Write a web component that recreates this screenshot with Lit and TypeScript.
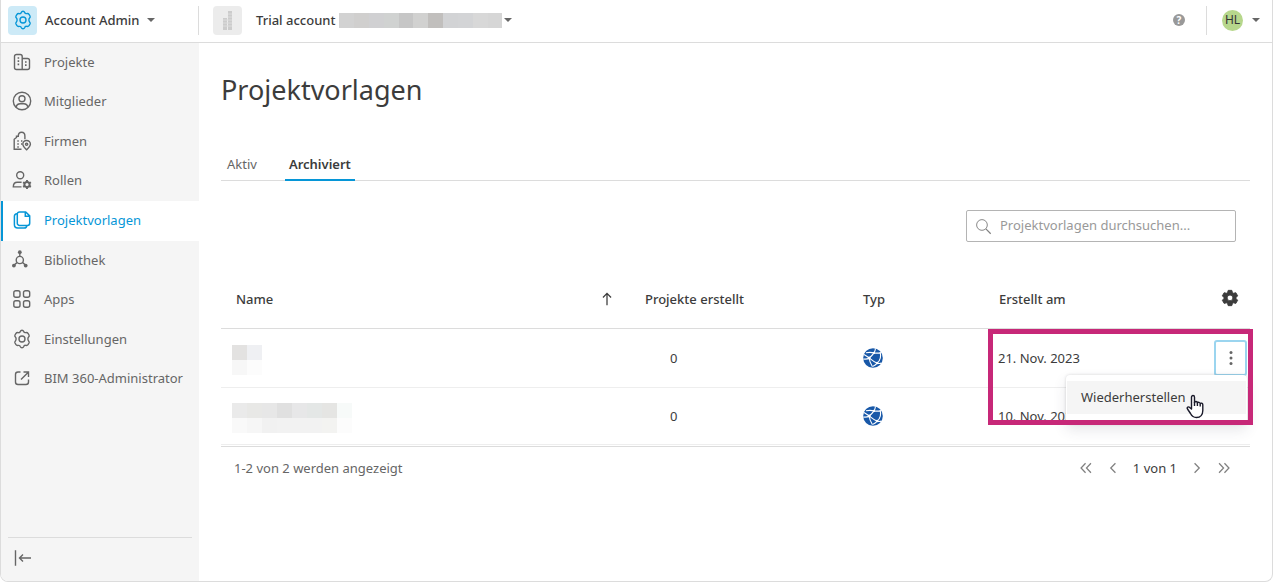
import { LitElement, html, css, svg, nothing } from "lit";
import { customElement, property, state } from "lit/decorators.js";
import { classMap } from "lit/directives/class-map.js";

const gear = svg`<path d="M10 1.200c.9 0 1.400.5 1.700 1.300.3.900 1.100 1.300 2 1.100 1-.2 1.800-.1 2.300.7l1 1.700c.5.900.2 1.500-.4 2.100-.7.700-.7 1.500-.7 1.900s0 1.200.7 1.900c.6.600.9 1.200.4 2.100l-1 1.700c-.5.800-1.300.9-2.300.7-.9-.2-1.700.2-2 1.100-.3.800-.8 1.300-1.700 1.300s-1.400-.5-1.700-1.300c-.3-.9-1.100-1.300-2-1.100-1 .2-1.800.1-2.300-.7l-1-1.700c-.5-.9-.2-1.500.4-2.100.7-.7.7-1.500.7-1.900s0-1.200-.7-1.900c-.6-.6-.9-1.200-.4-2.100l1-1.700c.5-.8 1.300-.9 2.300-.7.9.2 1.700-.2 2-1.100.3-.8.800-1.300 1.700-1.300z"/><circle cx="10" cy="10" r="3"/>`;

const icons: Record<string, unknown> = {
  gear,
  projects: svg`<path d="M10.500 17.500h-6a2 2 0 0 1-2-2v-11a2 2 0 0 1 2-2h3.700a2 2 0 0 1 2 2v13M10.200 6.500h5.300a2 2 0 0 1 2 2v7a2 2 0 0 1-2 2h-5.300"/><path d="M5.600 6h1.600M5.600 9.200h1.600M5.600 12.400h1.600M13 10h1.600M13 13.200h1.600" stroke-width="1.700"/>`,
  members: svg`<circle cx="10" cy="10" r="8.700"/><circle cx="10" cy="7.800" r="3"/><path d="M4 16c.6-2.300 2-3.300 4-3.300h4c2 0 3.400 1 4 3.300"/>`,
  companies: svg`<path d="M9.500 18.300H2.200V8.300l2.300-1.800V5.200h1.800c0-2.300 1.400-3.900 3.300-3.900s3.300 1.600 3.300 3.900v3M2.200 18.300h6"/><path d="M5.300 10h1.500M5.300 13h1.500M5.300 16h1.500M9 10h1.400M9 13h1" stroke-width="1.500"/><path d="M14.600 18.800c-2.200-2.200-3.800-3.700-3.800-5.500a3.800 3.800 0 0 1 7.600 0c0 1.800-1.600 3.300-3.800 5.500z"/><circle cx="14.600" cy="13.200" r="1.100"/>`,
  roles: svg`<circle cx="8.200" cy="5.200" r="3.500"/><path d="M9.500 16.900H1.300c0-3 1.500-4.700 4-4.700h4.300"/><circle cx="15" cy="14.500" r="2.600" stroke-width="2"/><path d="M15 10v1.800M15 17.200V19M11.100 12.200l1.600 1M17.300 15.900l1.600.9M11.100 16.800l1.600-.9M17.300 13.200l1.600-1" stroke-width="1.900"/>`,
  templates: svg`<path d="M7.500 1.900h6.200l4 4v7.300a2.200 2.200 0 0 1-2.200 2.200h-8a2.200 2.200 0 0 1-2.200-2.200V4.100a2.200 2.200 0 0 1 2.200-2.200zM13.300 2v4.200h4.200" stroke-width="1.500"/><path d="M5 3.800c-1.700.1-2.600 1-2.600 2.500v8.500c0 2 1.300 3.200 3.300 3.200h6.600c1.500 0 2.400-.8 2.500-2.400" stroke-width="1.500"/>`,
  library: svg`<circle cx="7.800" cy="10" r="3.600"/><path d="M7.800 6.400V2M5 12.600l-3.500 2.900M10.600 12.600l3.500 2.900"/><g fill="currentColor" stroke="none"><circle cx="7.800" cy="2.200" r="1.900"/><circle cx="1.900" cy="15.600" r="1.900"/><circle cx="13.700" cy="15.600" r="1.900"/></g>`,
  apps: svg`<rect x="1.800" y="1.700" width="6.200" height="6.600" rx="2"/><rect x="11.500" y="1.700" width="6.200" height="6.600" rx="2"/><rect x="1.800" y="11.700" width="6.200" height="6.600" rx="2"/><rect x="11.500" y="11.700" width="6.200" height="6.600" rx="2"/>`,
  external: svg`<path d="M8.500 4H6a2.500 2.500 0 0 0-2.500 2.500V14A2.500 2.500 0 0 0 6 16.500h8a2.500 2.500 0 0 0 2.500-2.500v-2.500M11.500 4h5v5M16.300 4.200l-7.300 7.300"/>`,
  collapse: svg`<path d="M2.500 2.300v15.400M18 10H6.500M10 6.500L6.500 10l3.500 3.500"/>`,
  search: svg`<circle cx="8.200" cy="8.200" r="6.300" stroke-width="1.100"/><path d="M12.800 12.800l5.700 5.700" stroke-width="1.400"/>`,
  up: svg`<path d="M10 17V4M5.500 8.300L10 3.800l4.500 4.500"/>`,
  first: svg`<path d="M9.500 4.700L4.500 10l5 5.300M15.500 4.700l-5 5.300 5 5.300"/>`,
  prev: svg`<path d="M12.700 4.700L7.500 10l5.200 5.300"/>`,
  next: svg`<path d="M7.300 4.700l5.200 5.300-5.200 5.300"/>`,
  last: svg`<path d="M4.500 4.700l5 5.300-5 5.300M10.500 4.700l5 5.300-5 5.300"/>`,
};

const icon = (name: string) => html`<svg
  class="icon"
  viewBox="0 0 20 20"
  fill="none"
  stroke="currentColor"
  stroke-width="1.400"
  aria-hidden="true"
>${icons[name]}</svg>`;

const caret = html`<svg class="caret" viewBox="0 0 8 4" aria-hidden="true"><path d="M0 0h8L4 4z" fill="currentColor" /></svg>`;

const globe = html`<svg class="globe" viewBox="0 0 20 20" role="img" aria-label="Web">
  <circle cx="10" cy="10" r="9.800" fill="#1858a8" />
  <g fill="none" stroke="#fff" stroke-width="1.100">
    <path d="M1 6.500c1.500 1 3.500 2.300 5.200 3.500 2.800 2.200 5 4 8 5.200 1.500.5 3 .4 4.300-.2" />
    <path d="M.3 11c2.500.3 4.500 0 5.900-1C8.500 8 9.800 6.800 11 4.900 11.800 3.500 12.300 2 12.500.5" />
    <path d="M3 4.800c3-.7 5.500-.6 8 .1 3 .3 5 .2 7 0" />
    <path d="M6.200 10c.2 3 1.300 5.800 3.300 8.800M17 4c1.300 4 .5 8-2.800 11.200-1.200 1.400-2.700 2.500-4.200 3" />
  </g>
  <g fill="#fff"><circle cx="6.200" cy="10" r="1.500" /><circle cx="11" cy="4.900" r="1.100" /><circle cx="14.200" cy="15" r="1.200" /></g>
</svg>`;

interface NavItem {
  label: string;
  icon: string;
  active?: boolean;
}

const NAV: NavItem[] = [
  { label: "Projekte", icon: "projects" },
  { label: "Mitglieder", icon: "members" },
  { label: "Firmen", icon: "companies" },
  { label: "Rollen", icon: "roles" },
  { label: "Projektvorlagen", icon: "templates", active: true },
  { label: "Bibliothek", icon: "library" },
  { label: "Apps", icon: "apps" },
  { label: "Einstellungen", icon: "gear" },
  { label: "BIM 360-Administrator", icon: "external" },
];

interface Template {
  tiles: string[][];
  created: number;
  date: string;
}

const TEMPLATES: Template[] = [
  {
    tiles: [["#e3e2e1", "#eff0f3"], ["#f7f7f7", "#fcfcfc"]],
    created: 0,
    date: "21. Nov. 2023",
  },
  {
    tiles: [
      ["#eaeaea", "#e8e8e6", "#e7e7e7", "#e0e0e0", "#e7e7e8", "#e4e7e6", "#e5e5e3", "#f7faf9"],
      ["#f9f9f9", "#f6f6f6", "#f1f1f1", "#f2f2f2", "#f2f2f2", "#f2f2f2", "#f3f3f1", "#fcfcfc"],
    ],
    created: 0,
    date: "10. Nov. 2023",
  },
];

const ACCOUNT_TILES = ["#d2d2d2", "#d0cfce", "#d0d0d2", "#d0d2d1", "#c6c6c6", "#d1d1d0", "#c1bfbd", "#d2d3d5", "#d3d4d6", "#d8d8d8", "#d6d6d6"];

const base = css`
  * {
    box-sizing: border-box;
  }
  button,
  input {
    font: inherit;
    color: inherit;
  }
  button {
    padding: 0;
    border: 0;
    background: none;
    cursor: pointer;
  }
  .icon {
    display: block;
    flex: none;
    width: 20px;
    height: 20px;
  }
  .caret {
    display: block;
    flex: none;
    width: 8px;
    height: 4px;
    color: #666;
  }
`;

@customElement("redacted-text")
class RedactedText extends LitElement {
  @property({ attribute: false }) rows: string[][] = [];
  static styles = css`
    :host {
      display: block;
    }
    .line {
      display: flex;
    }
    .tile {
      width: 15px;
      height: 15px;
    }
  `;
  render() {
    return this.rows.map(
      (r) => html`<div class="line">${r.map((c) => html`<span class="tile" style="background:${c}"></span>`)}</div>`
    );
  }
}

@customElement("app-header")
class AppHeader extends LitElement {
  static styles = [
    base,
    css`
      :host {
        display: flex;
        align-items: center;
        height: 43px;
        padding: 0 12px 2px 7px;
        border-bottom: 1px solid #dcdcdc;
        color: #3c3c3c;
        font-weight: 500;
      }
      .product {
        display: flex;
        align-items: center;
        gap: 8px;
        width: 191px;
        height: 29px;
        border-right: 1px solid #dcdcdc;
      }
      .tile {
        display: grid;
        place-items: center;
        width: 29px;
        height: 29px;
        border-radius: 4px;
        background: #cdeaf7;
        color: #0696d7;
      }
      .account {
        display: flex;
        align-items: center;
        margin-left: 14px;
      }
      .logo {
        width: 29px;
        height: 29px;
        margin-right: 14px;
        border-radius: 4px;
        background: #ececec;
      }
      .name {
        margin-right: 4px;
      }
      .hidden-name {
        margin-right: 2px;
        width: 163px;
        overflow: hidden;
      }
      .tools {
        display: flex;
        align-items: center;
        margin-left: auto;
      }
      .help {
        width: 12px;
        height: 12px;
        margin-right: 21px;
        border-radius: 50%;
        background: #999;
        color: #fff;
        font-size: 10px;
        font-weight: 700;
        line-height: 12px;
      }
      .user {
        display: flex;
        align-items: center;
        gap: 9px;
        height: 29px;
        padding-left: 15px;
        border-left: 1px solid #dcdcdc;
      }
      .avatar {
        width: 21px;
        height: 21px;
        border-radius: 50%;
        background: #b7d78c;
        color: #333;
        font-size: 12px;
        font-weight: 400;
        line-height: 20px;
        text-align: center;
      }
    `,
  ];
  render() {
    return html`
      <button class="product">
        <span class="tile">${icon("gear")}</span>Account Admin${caret}
      </button>
      <button class="account">
        <svg class="logo" viewBox="0 0 29 29" aria-hidden="true">
          <path d="M10 12h4v12h-4zM15 5h4v19h-4z" fill="#ccc" />
          <path d="M10 14h9M10 17h9M10 20h9M15 8h4M15 11h4" stroke="#ddd" />
        </svg>
        <span class="name">Trial account</span>
        <redacted-text class="hidden-name" .rows=${[ACCOUNT_TILES]}></redacted-text>
        ${caret}
      </button>
      <div class="tools">
        <button class="help" aria-label="Hilfe">?</button>
        <button class="user"><span class="avatar">HL</span>${caret}</button>
      </div>
    `;
  }
}

@customElement("side-nav")
class SideNav extends LitElement {
  static styles = [
    base,
    css`
      :host {
        display: flex;
        flex-direction: column;
        background: #f5f5f5;
        color: #666;
      }
      .list {
        display: grid;
        grid-auto-rows: 1fr;
        height: 356px;
      }
      .item {
        display: flex;
        align-items: center;
        gap: 12px;
        padding: 0 0 2px 11px;
        color: inherit;
        text-decoration: none;
      }
      .item.active {
        padding-left: 9px;
        border-left: 2px solid #0696d7;
        background: #fff;
        color: #0696d7;
      }
      .foot {
        display: flex;
        align-items: center;
        height: 44px;
        margin: auto 7px 0;
        padding: 0 0 4px 5px;
        border-top: 1px solid #dcdcdc;
      }
    `,
  ];
  render() {
    return html`
      <nav class="list">
        ${NAV.map(
          (n) => html`<a
            href="#"
            class=${classMap({ item: true, active: !!n.active })}
            aria-current=${n.active ? "page" : nothing}
            >${icon(n.icon)}${n.label}</a
          >`
        )}
      </nav>
      <div class="foot"><button aria-label="Einklappen">${icon("collapse")}</button></div>
    `;
  }
}

@customElement("template-table")
class TemplateTable extends LitElement {
  @state() private open = 0;
  static styles = [
    base,
    css`
      :host {
        display: block;
        position: relative;
      }
      table {
        width: 100%;
        table-layout: fixed;
        border-collapse: separate;
        border-spacing: 0;
      }
      .c-count {
        width: 219px;
      }
      .c-type {
        width: 135px;
      }
      .c-date {
        width: 217px;
      }
      .c-menu {
        width: 50px;
      }
      th {
        height: 59px;
        padding: 0 15px;
        border-bottom: 1px solid #dcdcdc;
        color: #3c3c3c;
        font-weight: 500;
        text-align: left;
      }
      td {
        padding: 0 15px;
        height: 59px;
        border-bottom: 1px solid #eee;
      }
      tr:last-child td {
        height: 57px;
      }
      th.count,
      th.date {
        padding-left: 16px;
      }
      .sort {
        display: flex;
        align-items: center;
        justify-content: space-between;
      }
      .sort .icon {
        width: 18px;
        height: 18px;
        margin-right: -2px;
      }
      td.name {
        padding: 4px 11px 0;
      }
      td.count {
        padding-left: 41px;
      }
      td.date {
        padding-left: 15px;
      }
      td.menu,
      th.menu {
        padding: 0;
      }
      .globe {
        display: block;
        width: 20px;
        height: 20px;
      }
      .settings {
        display: block;
        margin: 0 0 2px 21px;
      }
      .settings svg {
        display: block;
        width: 18px;
        height: 18px;
      }
      .anchor {
        position: relative;
        width: 33px;
        margin-left: 14px;
      }
      .kebab {
        display: grid;
        place-items: center;
        width: 33px;
        height: 36px;
        border: 1px solid #9bd5ef;
        border-radius: 3px;
      }
      .kebab.pressed {
        border-width: 2px;
      }
      .popup {
        position: absolute;
        top: 35px;
        right: 0;
        z-index: 1;
        width: 181px;
        padding: 6px 1px 10px;
        border-radius: 4px;
        background: #fff;
        box-shadow: 0 0 3px rgba(60, 60, 60, 0.2), 0 6px 14px rgba(60, 60, 80, 0.12);
      }
      .entry {
        width: 100%;
        height: 33px;
        padding: 0 0 2px 14px;
        background: #f5f5f5;
        color: #3c3c3c;
        text-align: left;
      }
      .marker {
        position: absolute;
        top: 59px;
        right: -3px;
        z-index: 2;
        width: 265px;
        height: 96px;
        border: 5px solid #c72878;
        pointer-events: none;
      }
      .pointer {
        position: absolute;
        top: 19px;
        right: 43px;
        width: 18px;
        height: 25px;
      }
    `,
  ];
  private toggle(i: number) {
    this.open = this.open === i ? -1 : i;
  }
  render() {
    return html`
      <table>
        <colgroup>
          <col />
          <col class="c-count" />
          <col class="c-type" />
          <col class="c-date" />
          <col class="c-menu" />
        </colgroup>
        <thead>
          <tr>
            <th><span class="sort">Name ${icon("up")}</span></th>
            <th class="count">Projekte erstellt</th>
            <th>Typ</th>
            <th class="date">Erstellt am</th>
            <th class="menu">
              <button class="settings" aria-label="Spalten">
                <svg viewBox="0 0 20 20" fill="#3c3c3c">
                  <path
                    fill-rule="evenodd"
                    d="M8 1.500h4l.7 2.400 1.300.8 2.500-.6 2 3.500-1.700 1.800v1.300l1.700 1.800-2 3.500-2.500-.6-1.300.8-.7 2.300H8l-.7-2.300-1.300-.8-2.500.6-2-3.500 1.700-1.800V9.400L1.500 7.600l2-3.500 2.500.6 1.300-.8zM10 6.700a3.200 3.200 0 1 0 0 6.400 3.200 3.200 0 0 0 0-6.400z"
                    stroke="#3c3c3c"
                    stroke-linejoin="round"
                  />
                </svg>
              </button>
            </th>
          </tr>
        </thead>
        <tbody>
          ${TEMPLATES.map(
            (t, i) => html`<tr>
              <td class="name"><redacted-text .rows=${t.tiles}></redacted-text></td>
              <td class="count">${t.created}</td>
              <td>${globe}</td>
              <td class="date">${t.date}</td>
              <td class="menu">${this.open === i ? this.menu(i) : nothing}</td>
            </tr>`
          )}
        </tbody>
      </table>
      <div class="marker"></div>
    `;
  }
  private menu(i: number) {
    return html`<div class="anchor">
      <button class="kebab pressed" aria-label="Aktionen" @click=${() => this.toggle(i)}>
        <svg width="4" height="16" viewBox="0 0 4 16" fill="#666">
          <circle cx="2" cy="2.500" r="1.500" /><circle cx="2" cy="8" r="1.500" /><circle cx="2" cy="13.500" r="1.500" />
        </svg>
      </button>
      <div class="popup">
        <button class="entry">Wiederherstellen</button>
        <svg class="pointer" viewBox="0 0 18 25" fill="#fff" stroke="#1b1b2b" stroke-width="1.400" stroke-linejoin="round" aria-hidden="true">
          <path d="M5.500 15V3.200c0-2.300 3-2.300 3 0v5.300c.3-1.500 2.800-1.300 2.900.4.600-1 2.700-.7 2.800.7.700-.8 2.600-.5 2.600 1.200v5.700c0 4-2.300 7-6.300 7-3.200 0-4.800-1.500-6-4l-3-4.500c-1-1.700 1-2.800 2.200-1.600z" />
          <path d="M8.500 8v4M11.400 9v3M14.200 10v2.500" fill="none" />
        </svg>
      </div>
    </div>`;
  }
}

@customElement("app-root")
class AppRoot extends LitElement {
  static styles = [
    base,
    css`
      :host {
        display: flex;
        flex-direction: column;
        box-sizing: border-box;
        min-height: 100vh;
        border: 1px solid #dcdcdc;
        border-top: 0;
        border-radius: 0 0 8px 8px;
        overflow: hidden;
        background: #fff;
        color: #3c3c3c;
        font: 13px/18px "Noto Sans", "Open Sans", sans-serif;
      }
      .body {
        display: grid;
        grid-template-columns: 198px minmax(0, 1fr);
        flex: 1;
      }
      main {
        padding: 27px 22px 0;
      }
      h1 {
        margin: 0;
        font-size: 27px;
        font-weight: 400;
        line-height: 40px;
      }
      .tabs {
        display: flex;
        gap: 24px;
        height: 32px;
        margin-top: 39px;
        padding-left: 2px;
        border-bottom: 1px solid #dcdcdc;
      }
      .tab {
        height: 32px;
        padding: 0 4px;
        border-bottom: 2px solid transparent;
        color: #666;
      }
      .tab.on {
        border-color: #0696d7;
        color: #3c3c3c;
        font-weight: 600;
      }
      .search {
        display: flex;
        align-items: center;
        gap: 8px;
        width: 270px;
        height: 32px;
        margin: 29px 14px 28px auto;
        padding: 0 8px;
        border: 1px solid #b4b4b4;
        border-radius: 2px;
        color: #808080;
      }
      .search .icon {
        width: 17px;
        height: 17px;
      }
      .search input {
        flex: 1;
        min-width: 0;
        padding: 0 0 2px;
        border: 0;
        outline: 0;
        background: none;
      }
      .search input::placeholder {
        color: #999;
        opacity: 1;
      }
      .footer {
        display: flex;
        align-items: center;
        justify-content: space-between;
        height: 43px;
        margin-top: 1px;
        padding: 0 17px 0 13px;
        border-top: 1px solid #dcdcdc;
        color: #666;
      }
      .pager {
        display: flex;
        align-items: center;
        gap: 9px;
        color: #808080;
      }
      .pager .icon {
        width: 18px;
        height: 18px;
      }
      .page {
        margin: 0 2px;
        color: #3c3c3c;
      }
    `,
  ];
  render() {
    return html`
      <app-header></app-header>
      <div class="body">
        <side-nav></side-nav>
        <main>
          <h1>Projektvorlagen</h1>
          <div class="tabs" role="tablist">
            <button class="tab" role="tab" aria-selected="false">Aktiv</button>
            <button class="tab on" role="tab" aria-selected="true">Archiviert</button>
          </div>
          <label class="search">
            ${icon("search")}
            <input type="search" aria-label="Projektvorlagen durchsuchen" placeholder="Projektvorlagen durchsuchen..." />
          </label>
          <template-table></template-table>
          <div class="footer">
            <span>1-2 von 2 werden angezeigt</span>
            <div class="pager">
              <button aria-label="Erste Seite">${icon("first")}</button>
              <button aria-label="Vorherige Seite">${icon("prev")}</button>
              <span class="page">1 von 1</span>
              <button aria-label="Nächste Seite">${icon("next")}</button>
              <button aria-label="Letzte Seite">${icon("last")}</button>
            </div>
          </div>
        </main>
      </div>
    `;
  }
}
